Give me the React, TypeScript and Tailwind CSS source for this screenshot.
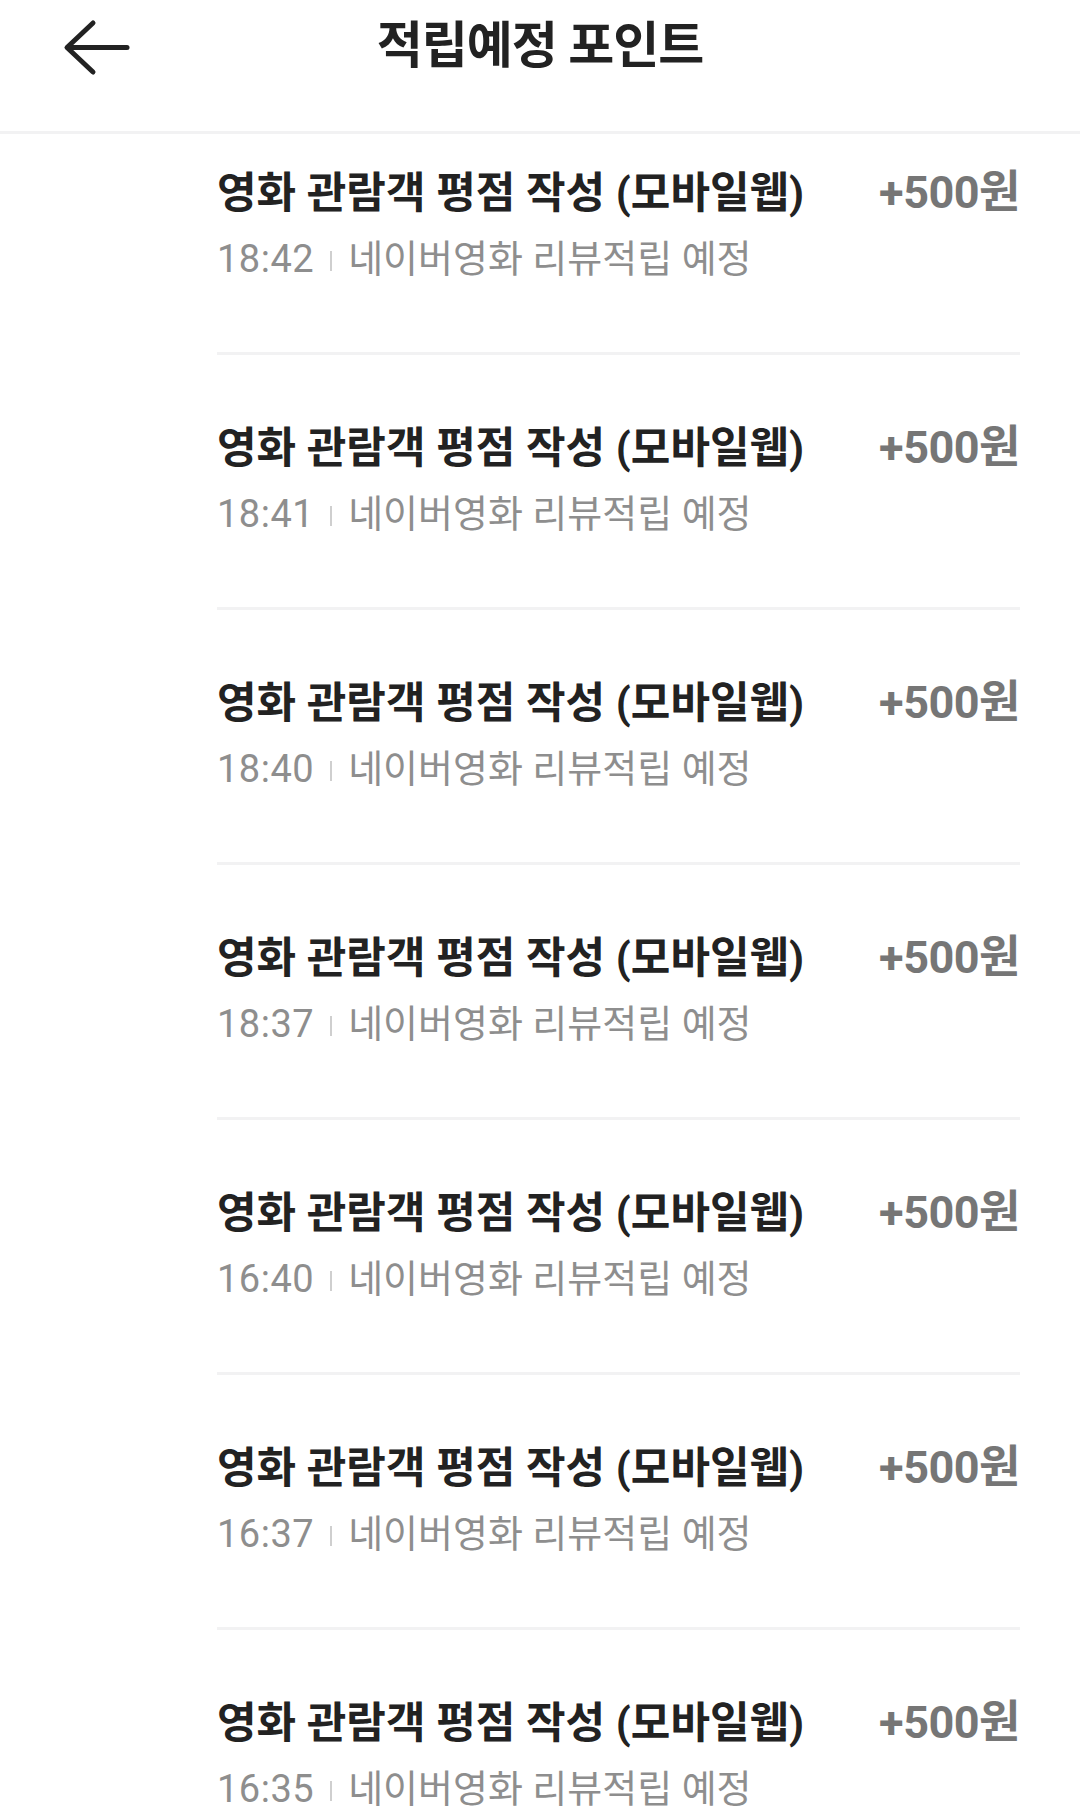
const ROWS = [
  { time: "18:42" },
  { time: "18:41" },
  { time: "18:40" },
  { time: "18:37" },
  { time: "16:40" },
  { time: "16:37" },
  { time: "16:35" },
];

const FONT = "font-['Roboto','Noto_Sans_CJK_KR',sans-serif]";

function BackArrow() {
  return (
    <svg width="68" height="59" viewBox="0 0 68 59" fill="none" stroke="#222222" strokeWidth="5" strokeLinecap="round" strokeLinejoin="round">
      <path d="M65 29.5H6" />
      <path d="M31 5L5 29.5L31 54" />
    </svg>
  );
}

function PointRow({ time }: { time: string }) {
  return (
    <div className="border-b-[3px] border-[#f2f2f3] pt-[69px] pb-[71px] first:pt-[35px]">
      <div className="flex items-baseline justify-between">
        <p className="whitespace-nowrap font-bold text-[43px] text-[#222222] leading-[48px]">영화 관람객 평점 작성 (모바일웹)</p>
        <p className="whitespace-nowrap font-bold text-[45px] text-[#767676] leading-[48px] tracking-[-0.5px]">+500원</p>
      </div>
      <div className="mt-5 flex items-center text-[38px] text-[#8e8e8e] leading-[44px]">
        <span className="tracking-[0.5px]">{time}</span>
        <span className="mx-[16px] mt-[3px] h-[20px] w-[2px] bg-[#cfcfcf]" />
        <span className="whitespace-nowrap">네이버영화 리뷰적립 예정</span>
      </div>
    </div>
  );
}

export default function App() {
  return (
    <div className={`h-[1820px] w-[1080px] overflow-hidden bg-white ${FONT}`}>
      <header className="grid h-[134px] grid-cols-[1fr_auto_1fr] items-start border-b-[3px] border-[#f2f2f3]">
        <button className="justify-self-start pt-[18px] pl-[62px]" type="button">
          <BackArrow />
        </button>
        <h1 className="pt-[17px] font-bold text-[50px] text-[#222222] leading-[58px] tracking-[-1px]">적립예정 포인트</h1>
        <div />
      </header>

      <div className="pr-[60px] pl-[217px]">
        {ROWS.map((row) => (
          <PointRow key={row.time} time={row.time} />
        ))}
      </div>
    </div>
  );
}
